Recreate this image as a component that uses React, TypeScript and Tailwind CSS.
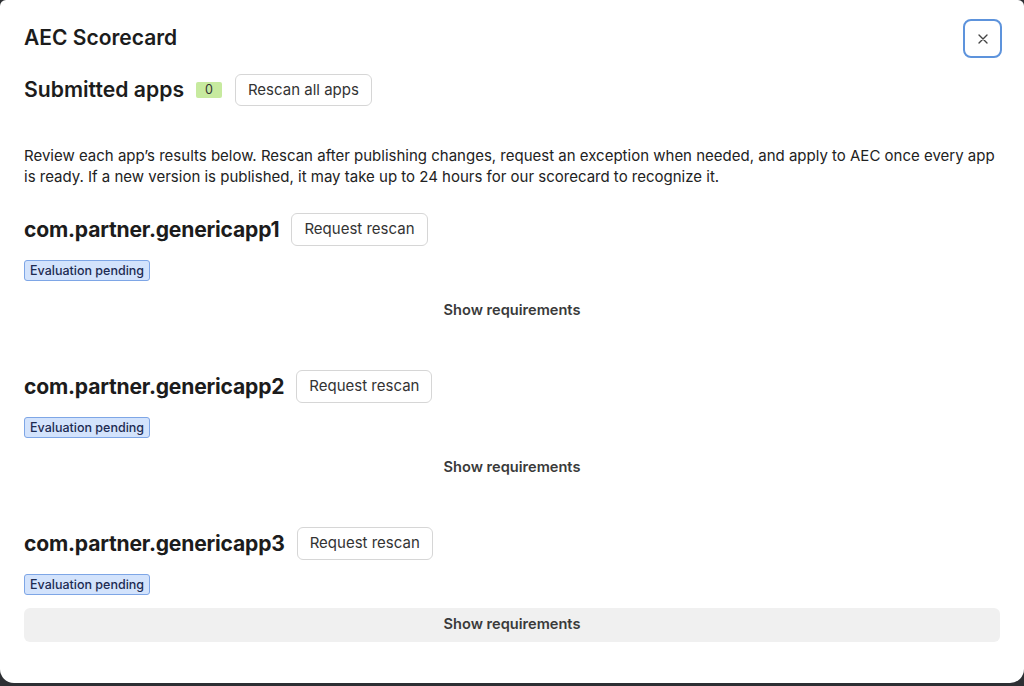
const apps = ['com.partner.genericapp1', 'com.partner.genericapp2', 'com.partner.genericapp3']

const AppSection = ({ name, active }: { name: string; active?: boolean }) => {
  return (
    <section className="flex flex-col">
      <div className="flex items-center gap-3">
        <h3 className="text-[21.1px] font-bold tracking-[-0.2px] text-[#1c1c1c]">{name}</h3>
        <button className="h-[33px] rounded-md border border-[#d6d6d6] bg-white px-3 text-[15px] text-[#333]">
          Request rescan
        </button>
      </div>
      <div className="mt-[14px] flex">
        <span className="rounded-[3px] border border-[#7ea6e6] bg-[#d3e3fc] px-[5px] py-[1px] text-[12.5px] leading-[17px] font-medium text-[#1d2b52]">
          Evaluation pending
        </span>
      </div>
      <button
        className={`mt-[13px] h-[34px] w-full rounded-md text-[14.6px] font-semibold text-[#3a3a3a] ${active ? 'bg-[#f0f0f0]' : ''}`}
      >
        Show requirements
      </button>
    </section>
  )
}

export default function App() {
  return (
    <div className="h-[686px] w-[1024px] overflow-hidden bg-[#2d2f33] font-['Inter',sans-serif]">
      <div className="relative h-[683px] rounded-b-[14px] rounded-t-[6px] bg-white px-6 pt-[26px]">
        <button className="absolute top-[19px] right-[22px] flex h-[39px] w-[39px] items-center justify-center rounded-lg border-2 border-[#5d93dc] text-[#444]">
          <svg width="16" height="16" viewBox="0 0 24 24" fill="none" stroke="currentColor" strokeWidth="2" strokeLinecap="round">
            <path d="M18 6 6 18M6 6l12 12" />
          </svg>
        </button>
        <h1 className="text-[21px] leading-[24px] font-semibold text-[#1c1c1c]">AEC Scorecard</h1>
        <div className="mt-[24px] flex items-center">
          <h2 className="text-[21.2px] font-semibold text-[#1c1c1c]">Submitted apps</h2>
          <span className="ml-3 rounded-[2px] bg-[#c7ea9f] px-[9px] text-[12.5px] leading-[16px] text-[#333]">0</span>
          <button className="ml-[13px] h-[32px] rounded-md border border-[#d6d6d6] bg-white px-3 text-[15px] text-[#333]">
            Rescan all apps
          </button>
        </div>
        <p className="mt-[39px] text-[15px] leading-[21px] text-[#222]">
          Review each app’s results below. Rescan after publishing changes, request an exception when needed, and apply to AEC once every app
          is ready. If a new version is published, it may take up to 24 hours for our scorecard to recognize it.
        </p>
        <div className="mt-[26px] flex flex-col gap-[42px]">
          {apps.map((name, i) => (
            <AppSection key={name} name={name} active={i === apps.length - 1} />
          ))}
        </div>
      </div>
    </div>
  )
}
